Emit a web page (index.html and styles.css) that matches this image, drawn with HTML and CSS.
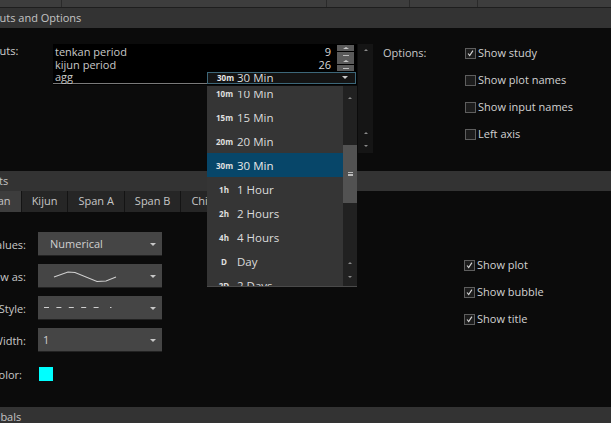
FILE: index.html
```html
<!DOCTYPE html>
<html>
<head>
<meta charset="utf-8">
<link rel="stylesheet" href="styles.css">
</head>
<body>
<div class="screen">
  <div class="topstrip">
    <div class="tcell w1"></div>
    <div class="tcell w2"></div>
    <div class="tcell w3"></div>
    <div class="tcell w4"></div>
    <div class="tcell w5"></div>
  </div>

  <div class="hdr"><span class="hdr-text">Inputs and Options</span></div>

  <div class="inputs-area">
    <div class="lbl inputs-lbl">Inputs:</div>
    <div class="in-table">
      <div class="in-row">
        <div class="in-name">tenkan period</div>
        <div class="in-val">9</div>
        <div class="spin"><span class="sp"><i class="tri-up"></i></span><span class="sp"><i class="dash"></i></span></div>
      </div>
      <div class="in-row">
        <div class="in-name">kijun period</div>
        <div class="in-val">26</div>
        <div class="spin"><span class="sp"><i class="tri-up"></i></span><span class="sp"><i class="dash"></i></span></div>
      </div>
      <div class="in-row">
        <div class="in-name last">agg</div>
        <div class="agg-box">
          <span class="badge">30m</span><span class="agg-text">30 Min</span>
          <i class="tri-dn agg-arrow"></i>
        </div>
      </div>
    </div>
    <div class="vscroll">
      <i class="tri-up small"></i>
      <div class="vs-fill"></div>
      <i class="tri-up small"></i>
      <i class="tri-dn small"></i>
    </div>
    <div class="options">
      <div class="lbl opt-lbl">Options:</div>
      <div class="checks">
        <div class="chk"><span class="box on"><svg viewBox="0 0 11 11"><polyline points="2.5,5.5 4.5,8 8.5,2"/></svg></span>Show study</div>
        <div class="chk"><span class="box"></span>Show plot names</div>
        <div class="chk"><span class="box"></span>Show input names</div>
        <div class="chk"><span class="box"></span>Left axis</div>
      </div>
    </div>
  </div>

  <div class="hdr"><span class="hdr-text">Plots</span></div>

  <div class="tabs">
    <div class="tab tab-active">Tenkan</div>
    <div class="tab">Kijun</div>
    <div class="tab">Span A</div>
    <div class="tab">Span B</div>
    <div class="tab">Chikou</div>
  </div>

  <div class="plots-area">
    <div class="plot-left">
      <div class="prow">
        <div class="plbl">Values:</div>
        <div class="sel"><span class="sel-text">Numerical</span><i class="tri-dn sel-arrow"></i></div>
      </div>
      <div class="prow">
        <div class="plbl">Draw as:</div>
        <div class="sel">
          <svg class="wave" viewBox="0 0 70 24" width="70" height="24"><polyline points="16,13 30,8 37,8.5 59,17.5 68,17 78,13"/></svg>
          <i class="tri-dn sel-arrow"></i>
        </div>
      </div>
      <div class="prow">
        <div class="plbl">Style:</div>
        <div class="sel">
          <svg class="dashes" viewBox="0 0 80 24" width="80" height="24"><line x1="6" y1="11.5" x2="68" y2="11.5"/><line class="dot" x1="72" y1="11.5" x2="73.5" y2="11.5"/></svg>
          <i class="tri-dn sel-arrow"></i>
        </div>
      </div>
      <div class="prow">
        <div class="plbl">Width:</div>
        <div class="sel"><span class="sel-text one">1</span><i class="tri-dn sel-arrow"></i></div>
      </div>
      <div class="prow color-row">
        <div class="plbl">Color:</div>
        <div class="swatch"></div>
      </div>
    </div>
    <div class="plot-right">
      <div class="chk"><span class="box on"><svg viewBox="0 0 11 11"><polyline points="2.5,5.5 4.5,8 8.5,2"/></svg></span>Show plot</div>
      <div class="chk"><span class="box on"><svg viewBox="0 0 11 11"><polyline points="2.5,5.5 4.5,8 8.5,2"/></svg></span>Show bubble</div>
      <div class="chk"><span class="box on"><svg viewBox="0 0 11 11"><polyline points="2.5,5.5 4.5,8 8.5,2"/></svg></span>Show title</div>
    </div>
  </div>

  <div class="hdr bottom"><span class="hdr-text">Globals</span></div>

  <div class="dropdown">
    <div class="dd-view">
      <div class="dd-list">
        <div class="dd-item"><span class="dd-badge">10m</span>10 Min</div>
        <div class="dd-item"><span class="dd-badge">15m</span>15 Min</div>
        <div class="dd-item"><span class="dd-badge">20m</span>20 Min</div>
        <div class="dd-item active"><span class="dd-badge">30m</span>30 Min</div>
        <div class="dd-item"><span class="dd-badge">1h</span>1 Hour</div>
        <div class="dd-item"><span class="dd-badge">2h</span>2 Hours</div>
        <div class="dd-item"><span class="dd-badge">4h</span>4 Hours</div>
        <div class="dd-item"><span class="dd-badge">D</span>Day</div>
        <div class="dd-item"><span class="dd-badge">2D</span>2 Days</div>
      </div>
    </div>
    <div class="dd-scroll">
      <i class="tri-up small top-a"></i>
      <div class="dd-thumb"><span class="grip"></span></div>
      <i class="tri-up small bot-a"></i>
      <i class="tri-dn small bot-b"></i>
    </div>
  </div>
</div>
</body>
</html>
```

FILE: styles.css
```css
* { box-sizing: border-box; margin: 0; padding: 0; }
html, body { background: #0b0b0b; }
body { width: 611px; height: 423px; overflow: hidden; font-family: "Open Sans", "Noto Sans", sans-serif; font-size: 11px; color: #cfcfcf; }

.screen { position: relative; width: 611px; height: 423px; overflow: hidden; background: #0b0b0b; display: flex; flex-direction: column; }

/* top strip */
.topstrip { height: 8px; flex: none; display: flex; background: #3d3d3d; border-bottom: 1px solid #1e1e1e; }
.tcell { height: 100%; border-right: 1px solid #2a2a2a; }
.w1 { width: 62px; }
.w2 { width: 265px; }
.w3 { width: 83px; }
.w4 { width: 68px; }
.w5 { flex: 1; border-right: none; }

/* section headers */
.hdr { height: 20px; flex: none; background: #333333; line-height: 20px; overflow: hidden; white-space: nowrap; }
.hdr-text { display: block; text-indent: -17px; color: #c4c4c4; }
.hdr.bottom { height: 16px; line-height: 20px; }

/* inputs */
.inputs-area { height: 143px; flex: none; display: flex; padding-top: 16px; }
.lbl { line-height: 14px; white-space: nowrap; }
.inputs-lbl { width: 70px; margin-left: -17px; }

.in-table { width: 304px; height: 41px; background: #000; padding-top: 1px; align-self: flex-start; }
.in-row { display: flex; height: 13px; line-height: 13px; }
.in-name { width: 154px; padding-left: 2px; color: #c8c8c8; }
.in-name.last { border-bottom: 1px solid #7a7a7a; height: 13px; line-height: 12px; }
.in-val { width: 130px; text-align: right; padding-right: 6px; color: #d8d8d8; }
.spin { width: 17px; display: flex; flex-direction: column; gap: 1px; }
.sp { height: 6px; background: #5a5a5a; display: flex; align-items: center; justify-content: center; }

.tri-up, .tri-dn { display: block; width: 0; height: 0; border-left: 3px solid transparent; border-right: 3px solid transparent; }
.tri-up { border-bottom: 2px solid #c8c8c8; }
.tri-dn { border-top: 3px solid #c8c8c8; }
.dash { display: block; width: 6px; height: 1px; background: #bdbdbd; }
.tri-up.small { border-left-width: 2px; border-right-width: 2px; border-bottom: 2px solid #8a8a8a; }
.tri-dn.small { border-left-width: 2px; border-right-width: 2px; border-top: 2px solid #8a8a8a; }

.agg-box { position: relative; margin-top: 1px; width: 149px; height: 12px; border: 1px solid #3d6779; background: #141414; display: flex; align-items: center; padding-left: 9px; color: #dcdcdc; }
.badge { font-size: 8px; font-weight: 700; width: 16px; margin-right: 4px; color: #e8e8e8; line-height: 10px; }
.agg-text { font-size: 11.5px; line-height: 10px; }
.agg-arrow { position: absolute; right: 7px; top: 3px; }

.vscroll { width: 15px; height: 109px; margin-left: 1px; background: #151515; display: flex; flex-direction: column; align-items: center; padding: 5px 0 6px; }
.vs-fill { flex: 1; }
.vscroll .tri-dn.small { margin-top: 11px; }

.options { display: flex; margin-left: 10px; padding-top: 2px; }
.opt-lbl { width: 82px; color: #c8c8c8; }
.checks { display: flex; flex-direction: column; gap: 13px; }
.chk { display: flex; align-items: center; height: 14px; line-height: 14px; white-space: nowrap; color: #d2d2d2; }
.box { width: 11px; height: 11px; border: 1px solid #5e5e5e; background: #1c1c1c; margin-right: 2px; flex: none; display: block; }
.box svg { display: block; width: 9px; height: 9px; fill: none; stroke: #d6d6d6; stroke-width: 1.4; overflow: visible; }

/* tabs */
.tabs { height: 21px; flex: none; display: flex; margin-left: -37px; }
.tab { background: #262626; border-right: 1px solid #141414; padding: 0 10px; line-height: 20px; white-space: nowrap; color: #c6c6c6; }
.tab.tab-active { background: #3d3d3d; }

/* plots */
.plots-area { height: 195px; flex: none; display: flex; }
.plot-left { width: 464px; display: flex; flex-direction: column; gap: 8px; padding-top: 20px; }
.prow { display: flex; align-items: center; height: 24px; }
.plbl { width: 46px; margin-left: -20px; text-align: right; white-space: nowrap; color: #c8c8c8; margin-right: 12px; }
.sel { position: relative; width: 124px; height: 24px; background: #454545; border-bottom: 1px solid #222; display: flex; align-items: center; }
.sel-text { padding-left: 12px; color: #d0d0d0; }
.sel-text.one { padding-left: 5px; }
.sel-arrow { position: absolute; left: 112px; top: 11px; }
.wave { position: absolute; left: 0; top: 0; overflow: visible; }
.wave polyline { fill: none; stroke: #d0d0d0; stroke-width: 1.1; }
.dashes { position: absolute; left: 0; top: 0; }
.dashes line { stroke: #cfcfcf; stroke-width: 1; stroke-dasharray: 5 7.4; }
.dashes line.dot { stroke-dasharray: none; }
.color-row { margin-top: 2px; }
.color-row .plbl { margin-left: -24px; margin-right: 16px; }
.swatch { width: 14px; height: 14px; background: #00ffff; margin-left: 1px; }

.plot-right { display: flex; flex-direction: column; gap: 13px; padding-top: 46px; }

/* dropdown overlay */
.dropdown { position: absolute; left: 207px; top: 86px; width: 150px; height: 201px; background: #353535; overflow: hidden; border-bottom: 1px solid #4a4a4a; padding-top: 5px; }
.dd-view { height: 100%; overflow: hidden; }
.dd-list { margin-top: -10px; width: 136px; }
.dd-item { height: 24px; display: flex; align-items: center; font-size: 11.5px; color: #dcdcdc; }
.dd-item.active { background: #074669; color: #e8e8e8; }
.dd-badge { width: 16px; margin-left: 9px; margin-right: 5px; text-align: center; font-size: 8px; font-weight: 700; color: #e0e0e0; }
.dd-scroll { position: absolute; right: 0; top: 0; width: 14px; height: 100%; background: #212121; }
.dd-scroll i { position: absolute; left: 5px; }
.top-a { top: 11px; }
.bot-a { top: 176px; }
.bot-b { top: 190px; }
.dd-thumb { position: absolute; left: 0; top: 59px; width: 14px; height: 58px; background: #525252; display: flex; align-items: center; justify-content: center; }
.grip { width: 5px; height: 4px; border-top: 1px solid #bbb; border-bottom: 1px solid #bbb; position: relative; }
.grip::after { content: ""; position: absolute; left: 0; top: 1px; width: 5px; height: 1px; background: #bbb; }
```
